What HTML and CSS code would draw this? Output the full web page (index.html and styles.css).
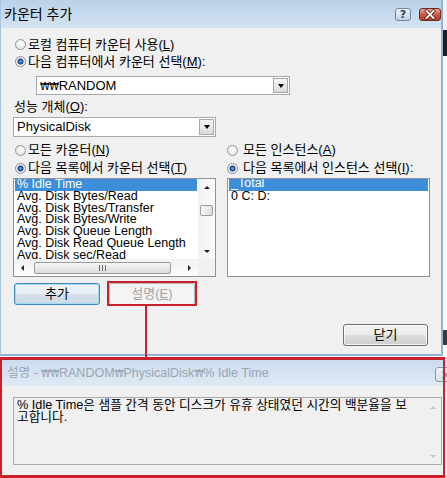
FILE: index.html
```html
<!DOCTYPE html>
<html lang="ko">
<head>
<meta charset="utf-8">
<title>카운터 추가</title>
<link rel="stylesheet" href="styles.css">
</head>
<body>
<div class="screen">
  <div class="top">
    <div class="dialog">
      <div class="titlebar">
        <span class="title">카운터 추가</span>
        <div class="caption-btns">
          <span class="cap-help">?</span>
          <span class="cap-close">
            <svg width="20" height="11" viewBox="0 0 20 11"><path d="M6.5 2 L13.5 9 M13.5 2 L6.5 9" stroke="#5b1d14" stroke-width="3.4" stroke-linecap="square" fill="none"/><path d="M6.5 2 L13.5 9 M13.5 2 L6.5 9" stroke="#fff" stroke-width="1.8" stroke-linecap="square" fill="none"/></svg>
          </span>
        </div>
      </div>
      <div class="client">
        <div class="radio"><span class="rb"></span>로컬 컴퓨터 카운터 사용(<u>L</u>)</div>
        <div class="radio"><span class="rb on"></span>다음 컴퓨터에서 카운터 선택(<u>M</u>):</div>
        <div class="combo combo-computer"><span class="combo-text"><span class="won">₩₩</span>RANDOM</span><span class="drop"></span></div>
        <div class="label">성능 개체(<u>O</u>):</div>
        <div class="combo combo-object"><span class="combo-text">PhysicalDisk</span><span class="drop"></span></div>
        <div class="columns">
          <div class="col col-left">
            <div class="radio row18"><span class="rb"></span>모든 카운터(<u>N</u>)</div>
            <div class="radio row18"><span class="rb on"></span>다음 목록에서 카운터 선택(<u>T</u>)</div>
            <div class="listbox scroll">
              <div class="items">
                <div class="item sel">% Idle Time</div>
                <div class="item">Avg. Disk Bytes/Read</div>
                <div class="item">Avg. Disk Bytes/Transfer</div>
                <div class="item">Avg. Disk Bytes/Write</div>
                <div class="item">Avg. Disk Queue Length</div>
                <div class="item">Avg. Disk Read Queue Length</div>
                <div class="item">Avg. Disk sec/Read</div>
              </div>
              <div class="vscroll">
                <span class="arr-box"><span class="tri-up"></span></span>
                <span class="vthumb"></span>
                <span class="spacer"></span>
                <span class="arr-box"><span class="tri-down"></span></span>
              </div>
              <div class="hscroll">
                <span class="arr-box h"><span class="tri-left"></span></span>
                <span class="hthumb"><span class="grip"></span></span>
                <span class="spacer"></span>
                <span class="arr-box h"><span class="tri-right"></span></span>
              </div>
              <div class="corner"></div>
            </div>
          </div>
          <div class="col col-right">
            <div class="radio row18"><span class="rb"></span>모든 인스턴스(<u>A</u>)</div>
            <div class="radio row18"><span class="rb on"></span>다음 목록에서 인스턴스 선택(<u>I</u>):</div>
            <div class="listbox plain">
              <div class="items">
                <div class="item sel tight">_Total</div>
                <div class="item">0 C: D:</div>
              </div>
            </div>
          </div>
        </div>
        <div class="btn-row">
          <button class="btn default">추가</button>
          <button class="btn disabled">설명(<u>E</u>)</button>
        </div>
        <div class="close-row">
          <button class="btn close">닫기</button>
        </div>
      </div>
    </div>
    <div class="strip"></div>
  </div>
  <div class="desc">
    <div class="desc-title">
      <span class="desc-caption">설명 - <span class="won">₩₩</span>RANDOM<span class="won">₩</span>PhysicalDisk<span class="won">₩</span>% Idle Time</span>
      <span class="desc-close">
        <svg width="20" height="12" viewBox="0 0 20 12"><path d="M6.5 2.5 L13.5 9.5 M13.5 2.5 L6.5 9.5" stroke="#8d99a6" stroke-width="2" fill="none"/></svg>
      </span>
    </div>
    <div class="desc-body">
      <div class="textbox">
        <div class="textbox-text">% Idle Time은 샘플 간격 동안 디스크가 유휴 상태였던 시간의 백분율을 보<br>고합니다.</div>
        <div class="tb-scroll">
          <span class="arr-box"><span class="tri-up dis"></span></span>
          <span class="spacer"></span>
          <span class="arr-box"><span class="tri-down dis"></span></span>
        </div>
      </div>
    </div>
  </div>
  <div class="note-box"></div>
  <div class="note-line"></div>
  <div class="note-frame"></div>
</div>
</body>
</html>
```

FILE: styles.css
```css
* { box-sizing: border-box; }
html, body { margin: 0; padding: 0; }
body {
  background: #fff;
  font-family: "Liberation Sans", "Noto Sans CJK KR", sans-serif;
  font-size: 13px;
  color: #000;
}
u { text-decoration: underline; text-underline-offset: 1px; }
.won { font-family: "DejaVu Sans Condensed", "DejaVu Sans", sans-serif; font-size: 0.85em; letter-spacing: -0.5px; }

.screen { position: relative; width: 447px; height: 478px; overflow: hidden; background: #fff; }
.top { display: flex; height: 357px; }

.dialog {
  width: 443px; height: 356px; flex: none;
  display: flex; flex-direction: column;
  background: #f0f0f0;
  border-left: 1px solid #a9c4df;
  border-right: 2px solid #8fb4d8;
  border-bottom: 2px solid #8fb4d8;
}
.strip {
  flex: 1;
  background: linear-gradient(#eef1f4 0 30px, #1e1e1e 30px 56px, #fbfbfb 56px 330px, #3a3a3a 330px 345px, #fff 345px);
}

.titlebar {
  height: 28px; flex: none;
  display: flex; justify-content: space-between; align-items: flex-start;
  padding: 0 0 0 3px;
  background: linear-gradient(#bad1e9, #d4e3f2);
}
.title { font-size: 14px; line-height: 16px; margin-top: 6px; }
.caption-btns { display: flex; gap: 8px; margin-top: 8px; }
.cap-help {
  width: 16px; height: 13px;
  border: 1px solid #71869d; border-radius: 3px;
  background: linear-gradient(#eaf1f8, #c2d3e6);
  font: bold 11px/11px "DejaVu Sans", sans-serif; color: #23405f;
  text-align: center;
}
.cap-close {
  width: 22px; height: 13px;
  border: 1px solid #6e2a20; border-radius: 3px;
  background: linear-gradient(#e9a898, #cd5641 50%, #b8402b);
  display: flex; align-items: center; justify-content: center;
}

.client { flex: 1; display: flex; flex-direction: column; padding: 8px 11px 0 12px; }

.radio {
  display: flex; align-items: center;
  height: 17px; line-height: 17px;
  padding-left: 2px; white-space: nowrap;
}
.row18 { height: 18px; line-height: 18px; }
.col-right .radio { padding-left: 0; }
.rb {
  width: 11px; height: 11px; flex: none;
  border: 1px solid #949494; border-radius: 50%;
  background: radial-gradient(circle at 50% 40%, #ffffff, #dedede);
  margin-right: 2px;
}
.col-right .rb { margin-right: 5px; }
.rb.on {
  border-color: #8a8f96;
  background: radial-gradient(circle at 50% 50%, #7ab6ec 0, #2a64ad 1.6px, #17427a 2.7px, #f6f6f6 3.4px, #dcdcdc 100%);
}

.combo {
  display: flex; align-items: stretch;
  background: #fff; border: 1px solid #a5a9ad; padding: 1px;
}
.combo-computer { margin: 6px 0 0 23px; width: 254px; height: 19px; }
.combo-object { margin-top: 2px; width: 203px; height: 20px; }
.combo-text { flex: 1; font-size: 13px; line-height: 15px; padding-left: 2px; white-space: nowrap; }
.combo-object .combo-text { line-height: 16px; }
.drop {
  width: 15px; flex: none;
  border: 1px solid #a7a7a7;
  background: linear-gradient(#f6f6f6, #dadada);
  display: flex; align-items: center; justify-content: center;
}
.drop::before {
  content: "";
  border-left: 3.5px solid transparent; border-right: 3.5px solid transparent;
  border-top: 4px solid #000;
}

.label { margin-top: 4px; height: 16px; line-height: 16px; padding-left: 1px; white-space: nowrap; }

.columns { display: grid; grid-template-columns: 203px 203px; column-gap: 11px; margin-top: 4px; }

.listbox { margin-top: 1px; height: 99px; border: 1px solid #8e9195; background: #fff; }
.listbox.scroll { display: grid; grid-template-columns: 1fr 17px; grid-template-rows: 1fr 17px; }
.items { padding: 0 1px; overflow: hidden; font-size: 12.5px; line-height: 11.75px; white-space: nowrap; }
.item { height: 11.75px; padding-left: 2px; }
.item.sel { background: #3d8dd8; color: #fff; line-height: 10.5px; height: 12px; margin-bottom: -0.25px; }
.item.sel.tight { line-height: 9.5px; }

.arr-box { width: 17px; height: 16px; flex: none; display: flex; align-items: center; justify-content: center; }
.arr-box.h { width: 17px; height: 17px; }
.spacer { flex: 1; }
.tri-up { border-left: 3px solid transparent; border-right: 3px solid transparent; border-bottom: 3px solid #222; }
.tri-down { border-left: 3px solid transparent; border-right: 3px solid transparent; border-top: 3px solid #222; }
.tri-left { border-top: 3px solid transparent; border-bottom: 3px solid transparent; border-right: 3px solid #222; }
.tri-right { border-top: 3px solid transparent; border-bottom: 3px solid transparent; border-left: 3px solid #222; }
.tri-up.dis { border-bottom-color: #c6c6c6; }
.tri-down.dis { border-top-color: #c6c6c6; }

.vscroll { display: flex; flex-direction: column; align-items: center; background: linear-gradient(to right, #f2f2f2, #fbfbfb); }
.vthumb {
  width: 13px; height: 11px; margin-top: 10px; flex: none;
  border: 1px solid #9c9c9c; border-radius: 2px;
  background: linear-gradient(to right, #f7f7f7, #dedede);
}
.hscroll { display: flex; align-items: center; background: linear-gradient(#f2f2f2, #fbfbfb); }
.hthumb {
  width: 137px; height: 12px; margin-left: 3px; flex: none;
  border: 1px solid #9c9c9c; border-radius: 2px;
  background: linear-gradient(#f7f7f7, #dcdcdc);
  display: flex; align-items: center; justify-content: center;
}
.grip {
  width: 7px; height: 6px;
  background: repeating-linear-gradient(to right, #6c6c6c 0 1px, transparent 1px 3px);
}
.corner { background: #f0f0f0; }

.btn {
  height: 22px; padding: 0;
  border: 1px solid #707070; border-radius: 3px;
  background: linear-gradient(#f2f2f2 0, #ebebeb 50%, #dddddd 50%, #cfcfcf 100%);
  box-shadow: inset 0 0 0 1px rgba(255,255,255,0.75);
  font-family: "Liberation Sans", "Noto Sans CJK KR", sans-serif;
  font-size: 13px; line-height: 20px; color: #000;
}
.btn-row { display: flex; gap: 9px; margin-top: 6px; padding-left: 1px; }
.btn-row .btn { width: 86px; }
.btn.default {
  border-color: #4588bb;
  background: linear-gradient(#eef4f8 0, #e6eef4 50%, #d6e2ea 50%, #c9d8e2 100%);
  box-shadow: inset 0 0 0 1px #9fdcf3;
}
.btn.disabled {
  border-color: #b5b9bc;
  background: #f4f4f4;
  box-shadow: none;
  color: #a3a3a3;
}
.close-row { display: flex; justify-content: flex-end; margin-top: 19px; }
.btn.close { width: 85px; margin-right: 2px; }

.desc { height: 121px; display: flex; flex-direction: column; background: #f0f0f0; overflow: hidden; }
.desc-title {
  height: 29px; flex: none;
  display: flex; justify-content: space-between; align-items: flex-start;
  padding-left: 7px;
  background: linear-gradient(#cbdcee, #dfe9f4);
  color: #9aa5b1; font-size: 12.5px; line-height: 16px;
}
.desc-caption { margin-top: 8px; white-space: nowrap; }
.desc-close {
  width: 22px; height: 15px; margin-top: 10px; margin-right: -10px; flex: none;
  border: 1px solid #8d99a6; border-radius: 3px;
  background: linear-gradient(#eef2f6, #d9e1ea);
  display: flex; align-items: center; justify-content: center;
}
.desc-body { flex: 1; padding: 11px 5px 0 13px; }
.textbox {
  height: 68px; border: 1px solid #a8abae; background: #f0f0f0;
  display: grid; grid-template-columns: 1fr 17px;
}
.textbox-text { padding: 1px 0 0 3px; font-size: 12.7px; line-height: 12px; white-space: nowrap; overflow: hidden; }
.tb-scroll { display: flex; flex-direction: column; align-items: center; padding-top: 1px; }
.tb-scroll .arr-box { height: 16px; }

.note-box { position: absolute; left: 107px; top: 281px; width: 90px; height: 25px; border: 2px solid #c8232c; }
.note-line { position: absolute; left: 145px; top: 306px; width: 2px; height: 52px; background: #c8232c; }
.note-frame {
  position: absolute; left: 0; top: 357px; width: 445px; height: 121px;
  border: 2px solid #c8232c; border-top-width: 3px; border-bottom-width: 3px;
}
```
